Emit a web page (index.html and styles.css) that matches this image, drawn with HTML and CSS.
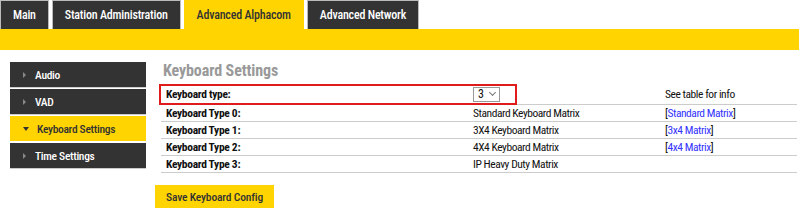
FILE: index.html
```html
<!DOCTYPE html>
<html lang="en">
<head>
    <meta charset="UTF-8">
    <title>Keyboard Settings</title>
    <link rel="stylesheet" href="styles.css">
</head>
<body>

<!-- Top tabs -->
<div class="tabs">
    <a class="tab">Main</a>
    <a class="tab">Station Administration</a>
    <a class="tab current">Advanced Alphacom</a>
    <a class="tab">Advanced Network</a>
</div>
<div class="band"></div>

<div class="layout">
    <!-- Side menu -->
    <nav class="side">
        <div class="side-item"><span class="arrow"></span>Audio</div>
        <div class="side-item"><span class="arrow"></span>VAD</div>
        <div class="side-item open"><span class="arrow"></span>Keyboard Settings</div>
        <div class="side-item"><span class="arrow"></span>Time Settings</div>
    </nav>

    <div class="content">
        <h2>Keyboard Settings</h2>
        <div class="settings">
            <div class="row first">
                <div class="mark"></div>
                <div class="label">Keyboard type:</div>
                <div class="value">
                    <span class="select">3 <span class="chev"></span></span>
                </div>
                <div class="info">See table for info</div>
            </div>
            <div class="row">
                <div class="label">Keyboard Type 0:</div>
                <div class="value">Standard Keyboard Matrix</div>
                <div class="info">[<a href="#">Standard Matrix</a>]</div>
            </div>
            <div class="row">
                <div class="label">Keyboard Type 1:</div>
                <div class="value">3X4 Keyboard Matrix</div>
                <div class="info">[<a href="#">3x4 Matrix</a>]</div>
            </div>
            <div class="row">
                <div class="label">Keyboard Type 2:</div>
                <div class="value">4X4 Keyboard Matrix</div>
                <div class="info">[<a href="#">4x4 Matrix</a>]</div>
            </div>
            <div class="row">
                <div class="label">Keyboard Type 3:</div>
                <div class="value">IP Heavy Duty Matrix</div>
                <div class="info"></div>
            </div>
        </div>
        <button class="save">Save Keyboard Config</button>
    </div>
</div>

</body>
</html>
```

FILE: styles.css
```css
/* Global */
body {
    margin: 0;
    font-family: "Roboto Condensed", "Liberation Sans Narrow", "DejaVu Sans Condensed", Roboto, sans-serif;
    font-size: 11.5px;
    letter-spacing: -0.3px;
    color: #111;
    background: #fff;
}
/* Tabs */
.tabs {
    display: flex;
    gap: 3px;
    height: 29px;
}
.tab {
    display: block;
    padding: 0 12px;
    line-height: 28px;
    font-size: 12px;
    letter-spacing: -0.2px;
    font-weight: 500;
    color: #fff;
    background-color: #333;
    border: 1px solid #bbb;
    border-bottom: none;
}
.tab.current {
    background-color: #ffd400;
    color: #333;
    border-color: #ffd400;
}
.band {
    height: 21px;
    background-color: #ffd400;
}
/* Layout */
.layout {
    display: flex;
    padding-top: 12px;
}
.side {
    margin-left: 10px;
    width: 136px;
    display: flex;
    flex-direction: column;
    gap: 1px;
}
.side-item {
    height: 25px;
    display: flex;
    align-items: center;
    padding-left: 13px;
    background-color: #333;
    color: #fff;
    font-weight: 500;
    border-bottom: 1px solid #ccc;
}
.side-item .arrow {
    width: 0;
    height: 0;
    border-top: 3px solid transparent;
    border-bottom: 3px solid transparent;
    border-left: 3px solid #888;
    margin-right: 9px;
}
.side-item.open {
    background-color: #ffd400;
    color: #333;
    border-bottom-color: #fff;
}
.side-item.open .arrow {
    border-left: 3px solid transparent;
    border-right: 3px solid transparent;
    border-top: 4px solid #333;
    border-bottom: none;
    margin-right: 8px;
}
/* Content */
.content {
    margin-left: 9px;
    flex: 1;
}
.content h2 {
    margin: 0 0 4px 8px;
    font-size: 16px;
    letter-spacing: -0.1px;
    color: #999;
    line-height: 18px;
}
.settings {
    margin-left: 6px;
    margin-right: 2px;
}
.row {
    position: relative;
    display: grid;
    grid-template-columns: 307px 192px auto;
    height: 16px;
    align-items: center;
    border-bottom: 1px solid #ccc;
}
.row.first {
    height: 20px;
}
.label {
    padding-left: 5px;
    font-weight: bold;
}
.value, .info {
    padding-left: 5px;
    letter-spacing: -0.45px;
}
.info a {
    color: #33f;
    text-decoration: none;
}
.select {
    display: inline-flex;
    align-items: center;
    gap: 7px;
    height: 13px;
    padding: 0 4px;
    border: 1px solid #999;
    font-size: 12px;
}
.chev {
    width: 4px;
    height: 4px;
    border-right: 1px solid #777;
    border-bottom: 1px solid #777;
    transform: rotate(45deg);
    margin-top: -3px;
}
/* red highlight drawn over first row */
.mark {
    position: absolute;
    left: -2px;
    top: 0;
    width: 354px;
    height: 17px;
    border: 2px solid #e01b1b;
}
.save {
    margin-top: 12px;
    height: 23px;
    padding: 0 11px;
    background-color: #ffd400;
    color: #333;
    border: none;
    font-family: inherit;
    font-size: 11.5px;
    letter-spacing: -0.15px;
    font-weight: 500;
}
```
